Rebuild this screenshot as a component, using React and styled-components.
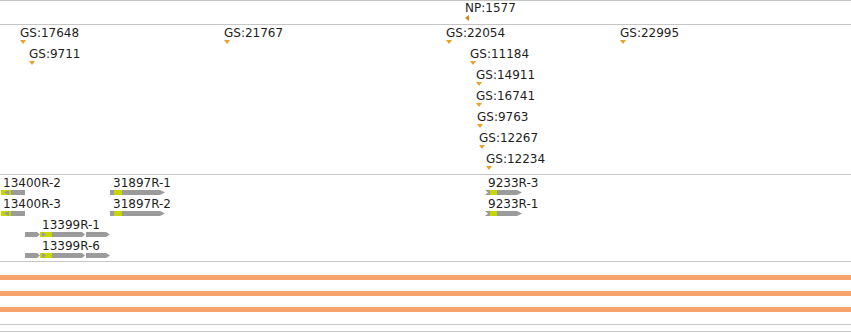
import React from "react";
import styled, { createGlobalStyle } from "styled-components";

const GlobalStyle = createGlobalStyle`
  html, body {
    margin: 0;
    padding: 0;
    background: #ffffff;
  }
  body {
    font-family: "DejaVu Sans", "Liberation Sans", sans-serif;
  }
`;

const GREY = "#9b9b9b";
const CDS = "#c5d600";

const Browser = styled.div`
  width: 851px;
  height: 333px;
  display: flex;
  flex-direction: column;
  border-top: 1px solid #c6c6c6;
  overflow: hidden;
  background: #fff;
`;

const Track = styled.div`
  position: relative;
  flex: none;
  height: ${(p) => p.$h}px;
  border-bottom: 1px solid #c6c6c6;
`;

const BandTrack = styled(Track)`
  display: flex;
  flex-direction: column;
  gap: 11px;
  padding-top: 13px;
  box-sizing: border-box;
  height: ${(p) => p.$h + 1}px;
`;

const Band = styled.div`
  height: 5px;
  background: #f4a46c;
`;

const Marker = styled.div`
  position: absolute;
  left: ${(p) => p.$x}px;
  top: ${(p) => 1 + p.$row * 21}px;
  display: flex;
  flex-direction: column;
  align-items: flex-start;
`;

const Label = styled.span`
  display: block;
  font-size: 12px;
  line-height: 14px;
  color: #1e1e1e;
  white-space: nowrap;
  padding-left: ${(p) => p.$indent || 0}px;
`;

const DownTri = styled.div`
  width: 0;
  height: 0;
  border-left: 3px solid transparent;
  border-right: 3px solid transparent;
  border-top: 4px solid #e9a12b;
`;

const LeftTri = styled.div`
  width: 0;
  height: 0;
  margin-top: 0;
  border-top: 3px solid transparent;
  border-bottom: 3px solid transparent;
  border-right: 4px solid #c98d14;
`;

const Glyph = styled.svg`
  display: block;
  height: 5px;
  overflow: visible;
`;

const sites = [
  { x: 20, row: 0, name: "GS:17648" },
  { x: 29, row: 1, name: "GS:9711" },
  { x: 224, row: 0, name: "GS:21767" },
  { x: 446, row: 0, name: "GS:22054" },
  { x: 620, row: 0, name: "GS:22995" },
  { x: 470, row: 1, name: "GS:11184" },
  { x: 476, row: 2, name: "GS:14911" },
  { x: 476, row: 3, name: "GS:16741" },
  { x: 477, row: 4, name: "GS:9763" },
  { x: 479, row: 5, name: "GS:12267" },
  { x: 486, row: 6, name: "GS:12234" },
];

const arrow = (a, b, tip = 2) =>
  `${a},0 ${b - tip},0 ${b},2.5 ${b - tip},5 ${a},5`;

function Gene13400() {
  return (
    <Glyph width="24" viewBox="0 0 24 5">
      <rect x="0" y="0" width="10" height="5" fill={CDS} />
      <polygon points="3,2.5 8,0 8,5" fill={GREY} />
      <rect x="10" y="0" width="14" height="5" fill={GREY} />
    </Glyph>
  );
}

function Gene31897() {
  return (
    <Glyph width="55" viewBox="0 0 55 5">
      <rect x="0" y="0" width="4" height="5" fill={GREY} />
      <rect x="4" y="0" width="8" height="5" fill={CDS} />
      <polygon points={arrow(12, 55, 5)} fill={GREY} />
    </Glyph>
  );
}

function Gene13399() {
  return (
    <Glyph width="85" viewBox="0 0 85 5">
      <polygon points={arrow(0, 15, 3)} fill={GREY} />
      <rect x="15" y="0" width="12" height="5" fill={CDS} />
      <polygon points="17,0 21,2.5 17,5" fill={GREY} />
      <polygon points={arrow(27, 60, 3)} fill={GREY} />
      <polygon points={arrow(61, 85, 4)} fill={GREY} />
    </Glyph>
  );
}

function Gene9233() {
  return (
    <Glyph width="37" viewBox="0 0 37 5">
      <polygon points="0,0 5,0 5,5 0,5 3,2.5" fill={GREY} />
      <rect x="5" y="0" width="7" height="5" fill={CDS} />
      <polygon points={arrow(12, 37, 5)} fill={GREY} />
    </Glyph>
  );
}

const genes = [
  { x: 1, row: 0, indent: 2, name: "13400R-2", Shape: Gene13400 },
  { x: 1, row: 1, indent: 2, name: "13400R-3", Shape: Gene13400 },
  { x: 110, row: 0, indent: 3, name: "31897R-1", Shape: Gene31897 },
  { x: 110, row: 1, indent: 3, name: "31897R-2", Shape: Gene31897 },
  { x: 25, row: 2, indent: 17, name: "13399R-1", Shape: Gene13399 },
  { x: 25, row: 3, indent: 17, name: "13399R-6", Shape: Gene13399 },
  { x: 485, row: 0, indent: 3, name: "9233R-3", Shape: Gene9233 },
  { x: 485, row: 1, indent: 3, name: "9233R-1", Shape: Gene9233 },
];

export default function App() {
  return (
    <>
      <GlobalStyle />
      <Browser>
        <Track $h={23}>
          <Marker $x={465} $row={-0.05}>
            <Label>NP:1577</Label>
            <LeftTri />
          </Marker>
        </Track>
        <Track $h={149}>
          {sites.map((s) => (
            <Marker key={s.name} $x={s.x} $row={s.row}>
              <Label>{s.name}</Label>
              <DownTri />
            </Marker>
          ))}
        </Track>
        <Track $h={86}>
          {genes.map(({ x, row, indent, name, Shape }) => (
            <Marker key={name} $x={x} $row={row}>
              <Label $indent={indent}>{name}</Label>
              <Shape />
            </Marker>
          ))}
        </Track>
        <BandTrack $h={62}>
          <Band />
          <Band />
          <Band />
        </BandTrack>
        <Track $h={6} />
      </Browser>
    </>
  );
}
